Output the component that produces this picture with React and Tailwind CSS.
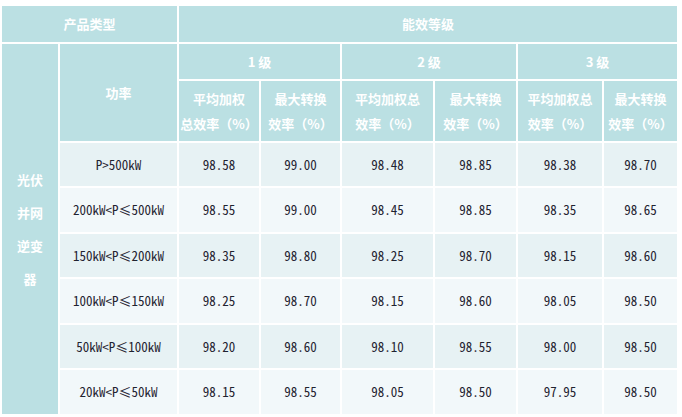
const LEVELS = ['1 级', '2 级', '3 级'];

const ROWS = [
  { p: 'P>500kW', v: ['98.58', '99.00', '98.48', '98.85', '98.38', '98.70'] },
  { p: '200kW<P≤500kW', v: ['98.55', '99.00', '98.45', '98.85', '98.35', '98.65'] },
  { p: '150kW<P≤200kW', v: ['98.35', '98.80', '98.25', '98.70', '98.15', '98.60'] },
  { p: '100kW<P≤150kW', v: ['98.25', '98.70', '98.15', '98.60', '98.05', '98.50'] },
  { p: '50kW<P≤100kW', v: ['98.20', '98.60', '98.10', '98.55', '98.00', '98.50'] },
  { p: '20kW<P≤50kW', v: ['98.15', '98.55', '98.05', '98.50', '97.95', '98.50'] },
];

const HEAD3 = [
  ['平均加权', '总效率（%）'],
  ['最大转换', '效率（%）'],
  ['平均加权总', '效率（%）'],
  ['最大转换', '效率（%）'],
  ['平均加权总', '效率（%）'],
  ['最大转换', '效率（%）'],
];

const th = 'bg-[#bbe0e3] text-white font-bold text-[13px] text-center align-middle p-0';
const td = "text-center align-middle p-0 whitespace-nowrap font-['Noto_Sans_Mono_CJK_SC','Liberation_Mono',monospace] text-[13px] text-[#1f2330]";

export default function App() {
  return (
    <div className="min-h-screen bg-white pt-1 font-['Noto_Sans_CJK_SC',sans-serif]">
      <table className="table-fixed w-[679px] border-separate border-spacing-[2px]">
        <colgroup>
          <col className="w-[56px]" />
          <col className="w-[117px]" />
          <col className="w-[80px]" />
          <col className="w-[79px]" />
          <col className="w-[91px]" />
          <col className="w-[81px]" />
          <col className="w-[84px]" />
          <col className="w-[73px]" />
        </colgroup>
        <tbody>
          <tr className="h-[36px]">
            <th colSpan={2} className={th}>产品类型</th>
            <th colSpan={6} className={th}>能效等级</th>
          </tr>
          <tr className="h-[35px]">
            <th rowSpan={8} className={`${th} leading-[33px] px-[15px]`}>
              光伏<br />并网<br />逆变<br />器
            </th>
            <th rowSpan={2} className={th}>功率</th>
            {LEVELS.map((l) => (
              <th key={l} colSpan={2} className={th}>{l}</th>
            ))}
          </tr>
          <tr className="h-[60px]">
            {HEAD3.map((h, i) => (
              <th key={i} className={`${th} leading-[25px] whitespace-nowrap`}>
                {h[0]}<br />{h[1]}
              </th>
            ))}
          </tr>
          {ROWS.map((r, i) => (
            <tr key={r.p} className={i % 2 === 0 ? 'h-[43px]' : 'h-[44px]'}>
              <td className={`${td} ${i % 2 === 0 ? 'bg-[#e7f2f4]' : 'bg-[#f2f8fa]'}`}>{r.p}</td>
              {r.v.map((v, j) => (
                <td key={j} className={`${td} ${i % 2 === 0 ? 'bg-[#e7f2f4]' : 'bg-[#f2f8fa]'}`}>{v}</td>
              ))}
            </tr>
          ))}
        </tbody>
      </table>
    </div>
  );
}
